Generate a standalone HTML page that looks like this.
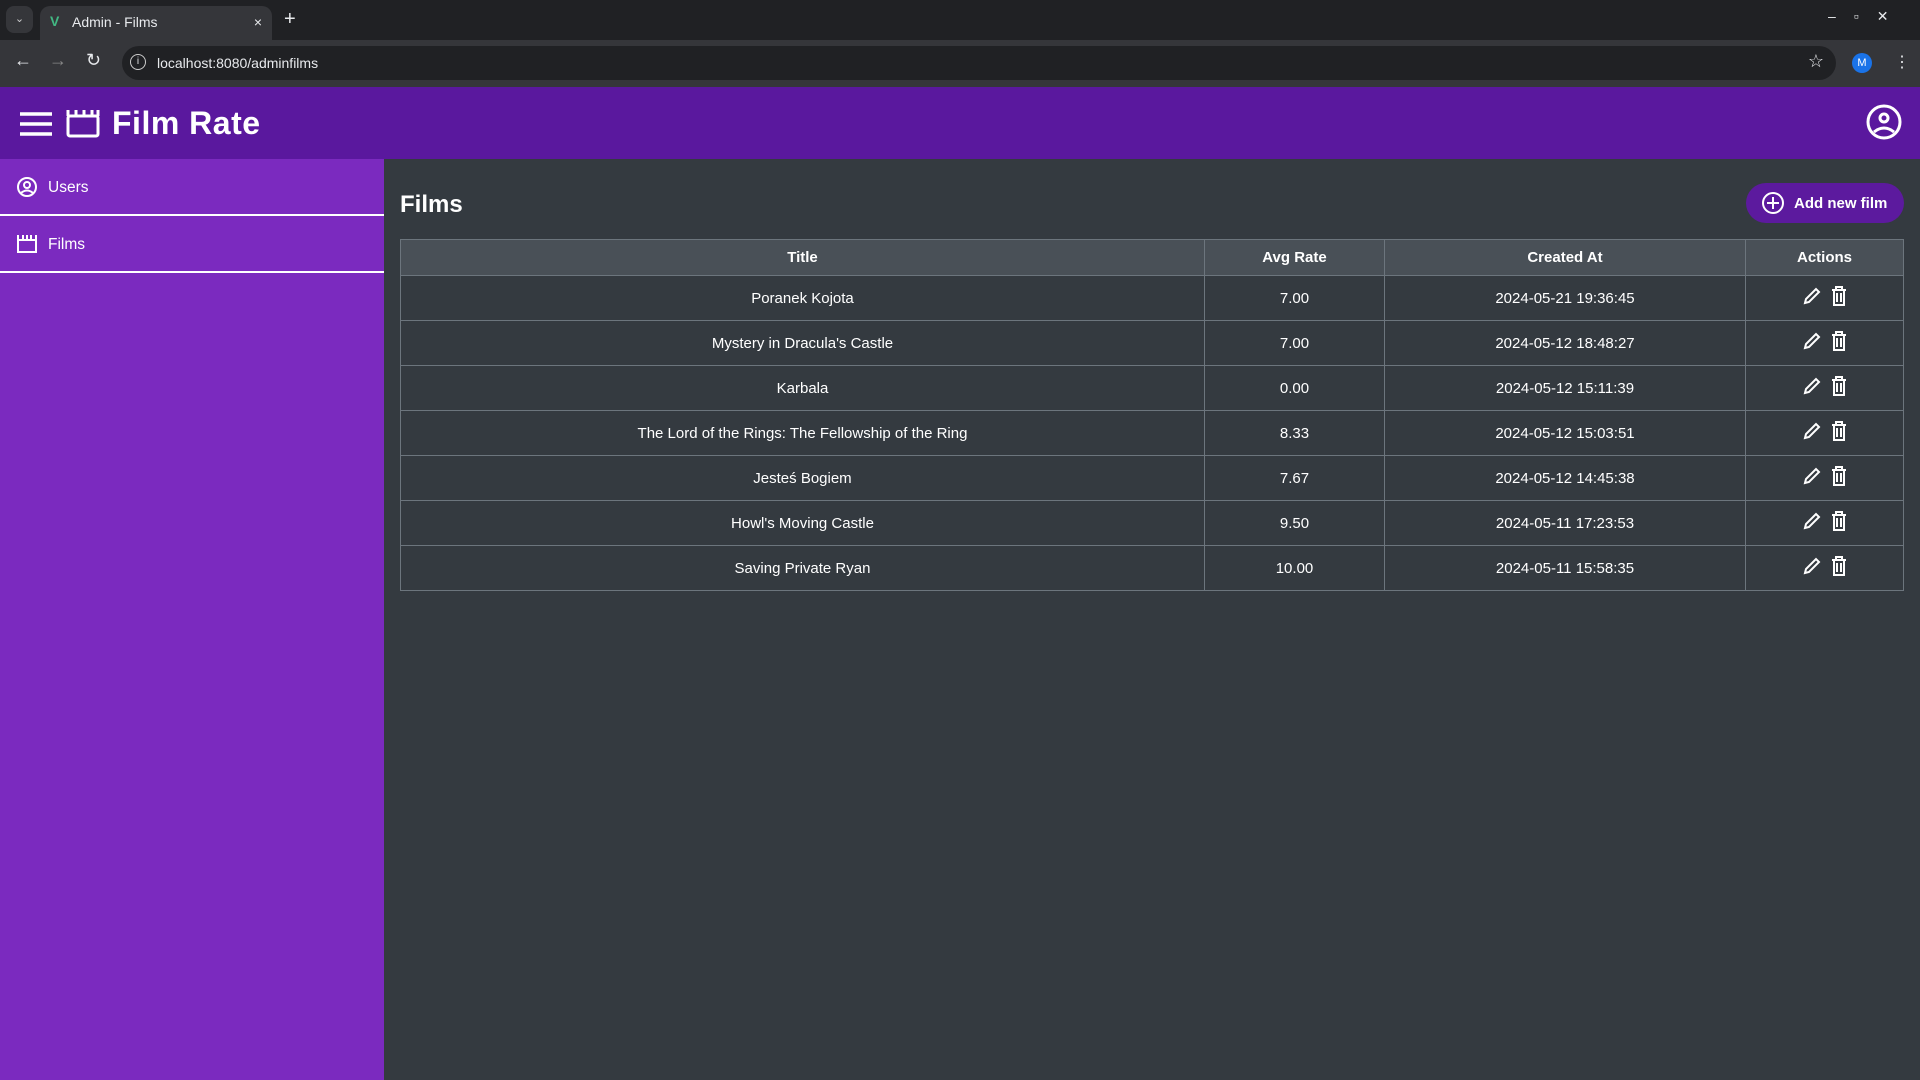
<!DOCTYPE html>
<html><head><meta charset="utf-8"><style>
*{box-sizing:border-box;margin:0;padding:0}
body{width:1920px;height:1080px;overflow:hidden;background:#343a40;font-family:"Liberation Sans",sans-serif;color:#fff;position:relative}
.tabs{position:absolute;left:0;top:0;width:1920px;height:41px;background:#202124}
.tab{position:absolute;left:40px;top:6px;width:232px;height:35px;background:#35363a;border-radius:10px 10px 0 0;font-size:14px;color:#e8eaed;padding:8px 0 0 32px}
.addr{position:absolute;left:0;top:40px;width:1920px;height:47px;background:#35363a}
.url{position:absolute;left:122px;top:6px;width:1714px;height:34px;background:#202124;border-radius:17px;font-size:14px;color:#e8eaed;padding:9px 0 0 35px}
.hdr{position:absolute;left:0;top:87px;width:1920px;height:72px;background:#5a189e}
.hdr .t{position:absolute;left:112px;top:18px;font-size:32px;font-weight:bold;letter-spacing:0.5px}
.side{position:absolute;left:0;top:159px;width:384px;height:921px;background:#7b2abf}
.item{height:57px;border-bottom:2px solid #fff;font-size:15.5px;padding:20px 0 0 48px;position:relative}
.item svg{position:absolute;left:17px;top:18px}
h2{position:absolute;left:400px;top:191px;font-size:24px}
.btn{position:absolute;left:1746px;top:183px;width:158px;height:40px;background:#5c1a9e;border-radius:20px;font-size:15px;font-weight:bold;padding:12px 0 0 48px}
.btn svg{position:absolute;left:16px;top:9px}
table{position:absolute;left:400px;top:239px;width:1504px;border-collapse:collapse;font-size:15px}
td,th{border:1px solid #6c757d;text-align:center;height:45px}
th{background:#495057;height:36px;font-weight:bold}
td{background:#343a40}
</style></head><body>
<div class="tabs"><div style="position:absolute;left:6px;top:6px;width:27px;height:27px;background:#35363a;border-radius:8px;font-size:11px;text-align:center;line-height:27px;color:#ccc">⌄</div>
<div class="tab"><span style="position:absolute;left:10px;top:7px;color:#42b883;font-weight:bold">V</span>Admin - Films<span style="position:absolute;right:10px;top:8px">×</span></div>
<span style="position:absolute;left:284px;top:8px;font-size:20px;color:#e8eaed">+</span>
<span style="position:absolute;left:1828px;top:8px;color:#e8eaed;font-size:14px;letter-spacing:18px">–▫✕</span></div>
<div class="addr"><span style="position:absolute;left:14px;top:10px;color:#e8eaed;font-size:18px">←</span><span style="position:absolute;left:49px;top:10px;color:#888;font-size:18px">→</span><span style="position:absolute;left:86px;top:10px;color:#e8eaed;font-size:18px">↻</span>
<div class="url"><span style="position:absolute;left:8px;top:8px;width:16px;height:16px;border:1.5px solid #ccc;border-radius:50%;font-size:10px;text-align:center;line-height:13px">i</span>localhost:8080/adminfilms<span style="position:absolute;right:12px;top:5px;font-size:18px">☆</span></div>
<div style="position:absolute;left:1852px;top:13px;width:20px;height:20px;border-radius:50%;background:#1a73e8;font-size:11px;text-align:center;line-height:20px">M</div>
<span style="position:absolute;left:1894px;top:12px;font-size:16px;color:#e8eaed">⋮</span></div>
<div class="hdr">
<svg style="position:absolute;left:20px;top:24px" width="32" height="26"><g stroke="#fff" stroke-width="3.5"><line x1="0" y1="3" x2="32" y2="3"/><line x1="0" y1="13" x2="32" y2="13"/><line x1="0" y1="23" x2="32" y2="23"/></g></svg>
<svg style="position:absolute;left:66px;top:21px" width="34" height="30" fill="none" stroke="#fff" stroke-width="3"><rect x="2" y="8" width="30" height="20" rx="2"/><path d="M2 8V2M10 8V2M18 8V2M26 8V2M32 8V2"/></svg>
<div class="t">Film Rate</div>
<svg style="position:absolute;left:1866px;top:17px" width="36" height="36" fill="none" stroke="#fff" stroke-width="3"><circle cx="18" cy="18" r="16"/><circle cx="18" cy="14" r="4"/><path d="M8 28q10-8 20 0"/></svg>
</div>
<div class="side">
<div class="item"><svg width="20" height="20" fill="none" stroke="#fff" stroke-width="2"><circle cx="10" cy="10" r="9"/><circle cx="10" cy="8" r="3"/><path d="M4 16q6-5 12 0"/></svg>Users</div>
<div class="item"><svg width="20" height="20" fill="none" stroke="#fff" stroke-width="2"><rect x="1" y="6" width="18" height="12"/><path d="M1 6V1M6 6V1M10 6V1M14 6V1M19 6V1"/></svg>Films</div>
</div>
<h2>Films</h2>
<div class="btn"><svg width="22" height="22" fill="none" stroke="#fff" stroke-width="2"><circle cx="11" cy="11" r="10"/><path d="M11 5v12M5 11h12"/></svg>Add new film</div>
<table>
<tr><th style="width:804px">Title</th><th style="width:180px">Avg Rate</th><th style="width:361px">Created At</th><th>Actions</th></tr>
<tr><td>Poranek Kojota</td><td>7.00</td><td>2024-05-21 19:36:45</td><td>ACT</td></tr>
<tr><td>Mystery in Dracula's Castle</td><td>7.00</td><td>2024-05-12 18:48:27</td><td>ACT</td></tr>
<tr><td>Karbala</td><td>0.00</td><td>2024-05-12 15:11:39</td><td>ACT</td></tr>
<tr><td>The Lord of the Rings: The Fellowship of the Ring</td><td>8.33</td><td>2024-05-12 15:03:51</td><td>ACT</td></tr>
<tr><td>Jesteś Bogiem</td><td>7.67</td><td>2024-05-12 14:45:38</td><td>ACT</td></tr>
<tr><td>Howl's Moving Castle</td><td>9.50</td><td>2024-05-11 17:23:53</td><td>ACT</td></tr>
<tr><td>Saving Private Ryan</td><td>10.00</td><td>2024-05-11 15:58:35</td><td>ACT</td></tr>
</table>
<script>
var ic='<svg width="20" height="20" fill="none" stroke="#fff" stroke-width="2" style="vertical-align:middle;margin-top:-6px"><path d="M3 17l1-4L14 3l3 3L7 16z"/></svg><svg width="18" height="20" fill="none" stroke="#fff" stroke-width="2" style="vertical-align:middle;margin:-6px 0 0 8px"><path d="M2 4h14M6 4V1h6v3M4 4v15h10V4M7 7v9M11 7v9"/></svg>';
document.querySelectorAll('td').forEach(function(t){if(t.textContent=='ACT')t.innerHTML=ic;});
</script>
</body></html>
